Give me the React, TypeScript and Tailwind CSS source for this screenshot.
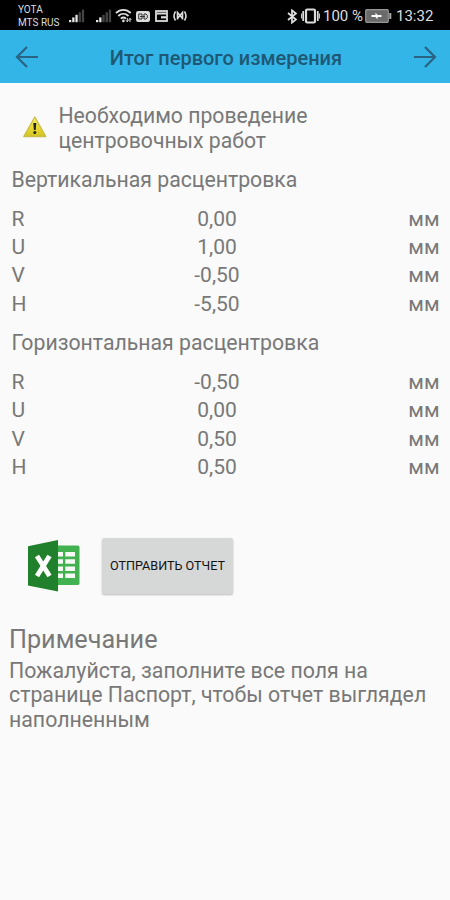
import type { ReactNode } from 'react';

type Row = { name: string; value: string };

const vertical: Row[] = [
  { name: 'R', value: '0,00' },
  { name: 'U', value: '1,00' },
  { name: 'V', value: '-0,50' },
  { name: 'H', value: '-5,50' },
];

const horizontal: Row[] = [
  { name: 'R', value: '-0,50' },
  { name: 'U', value: '0,00' },
  { name: 'V', value: '0,50' },
  { name: 'H', value: '0,50' },
];

function Signal({ level }: { level: number }) {
  return (
    <svg width="16" height="14" viewBox="0 0 16 14">
      {[0, 1, 2, 3, 4].map((i) => (
        <rect
          key={i}
          x={i * 3.2}
          y={11 - i * 2.6}
          width="2.3"
          height={2.2 + i * 2.6}
          fill={i < level ? '#e4e4e4' : '#444'}
        />
      ))}
    </svg>
  );
}

function StatusBar() {
  return (
    <div className="flex h-[30px] items-center bg-black pt-[2px] text-[#dedede]">
      <div className="ml-[18px] w-[51px] whitespace-nowrap text-[10px] leading-[13px]">
        <p>YOTA</p>
        <p>MTS RUS</p>
      </div>
      <Signal level={3} />
      <div className="ml-[11px]">
        <Signal level={2} />
      </div>
      {/* Wi-Fi */}
      <svg className="ml-[3px]" width="18" height="16" viewBox="0 0 18 16" fill="none" stroke="#e0e0e0" strokeWidth="1.8">
        <path d="M1 5C5.2 .7 11.5 .7 15.7 5M3.3 8C6.3 5.1 10.5 5.1 13.5 8M5.8 10.7C7.5 9.2 9.3 9.2 11 10.7" />
        <circle cx="8.4" cy="12.9" r="1.3" fill="#e0e0e0" stroke="none" />
        <path d="M12.3 10v3.5M11 12.3l1.3 1.5 1.3-1.5M15 14v-3.5M13.8 11.8l1.2-1.5 1.3 1.5" strokeWidth="1" />
      </svg>
      {/* HD */}
      <svg className="ml-[3px]" width="14" height="11" viewBox="0 0 14 11">
        <rect width="14" height="11" rx="2.2" fill="#dcdcdc" />
        <path d="M2.7 3H6v5H2.7zM8 3h2l1.3 1.3v2.4L10 8H8zM4 5.5h5" fill="none" stroke="#333" />
      </svg>
      <svg className="ml-[5px]" width="13" height="12" viewBox="0 0 13 12" fill="none" stroke="#dcdcdc">
        <rect x="1" y="1" width="11" height="10" strokeWidth="1.8" />
        <path d="M2 3.5h9" strokeWidth="2" />
        <path d="M6 7.3h5" strokeWidth="2.2" />
      </svg>
      <svg className="ml-[5px]" width="14" height="12" viewBox="0 0 14 12" fill="none" stroke="#dcdcdc" strokeWidth="1.6">
        <path d="M2.5 1.5Q-.5 6 2.5 10.5M11.5 1.5Q14.5 6 11.5 10.5M4.5 9.5v-7l2.5 3 2.5-3v7M4.5 8.5l2.5-3 2.5 3" />
      </svg>

      <svg className="ml-auto" width="10" height="15" viewBox="0 0 10 15" fill="none" stroke="#e0e0e0" strokeWidth="1.7">
        <path d="M1 4l8 6.5-4 3.2V1.3l4 3.2L1 11" />
      </svg>
      <svg className="ml-1" width="19" height="16" viewBox="0 0 19 16" fill="none" stroke="#dcdcdc">
        <rect x="5" y="1.5" width="9" height="13" rx="1.3" strokeWidth="2.2" />
        <path d="M2.2 3v10M16.8 3v10" strokeWidth="1.7" />
        <path d="M.6 5.5v5M18.4 5.5v5" />
      </svg>
      <span className="ml-[3px] w-[39px] whitespace-nowrap text-[15px] leading-none">100 %</span>
      <svg className="ml-[3px]" width="27" height="14" viewBox="0 0 27 14">
        <rect x=".7" y=".7" width="22.6" height="12.6" rx="1" fill="#6a6a6a" stroke="#969696" strokeWidth="1.2" />
        <path d="M24.3 4h2v6h-2z" fill="#aaa" />
        <path d="M6.5 6h4V3.5L12.500 6h4v2h-4v2.500L10.500 8h-4z" fill="#fff" />
      </svg>
      <span className="ml-1 mr-[17px] w-[37px] whitespace-nowrap text-[15px] leading-none">13:32</span>
    </div>
  );
}

function Arrow({ className }: { className?: string }) {
  return (
    <svg className={className} width="24" height="24" viewBox="0 0 24 24" fill="none" stroke="#2a6482" strokeWidth="2.2">
      <path d="M1 12h20.5M12 2l10 10-10 10" />
    </svg>
  );
}

function Table({ title, rows }: { title: ReactNode; rows: Row[] }) {
  return (
    <section className="pl-[11.5px] pr-[10.5px]">
      <h2 className="text-[21.25px] leading-[26px]">{title}</h2>
      <div className="mt-[11px]">
        {rows.map((row) => (
          <div key={row.name} className="grid h-[28.3px] grid-cols-3 items-center text-[21px]">
            <span>{row.name}</span>
            <span className="pr-[17px] text-center">{row.value}</span>
            <span className="text-right">мм</span>
          </div>
        ))}
      </div>
    </section>
  );
}

export default function App() {
  return (
    <div className="flex h-[900px] w-[450px] flex-col bg-[#fafafa] font-['Roboto',sans-serif] text-[#787878]">
      <StatusBar />
      <header className="flex h-[53px] items-center justify-between bg-[#33b5e8] pl-[15px] pr-[13px]">
        <Arrow className="rotate-180" />
        <h1 className="pt-[3px] text-[20px] font-medium text-[#205873]">Итог первого измерения</h1>
        <Arrow />
      </header>

      <div className="mt-[21px] flex items-center pl-[22px]">
        <svg className="mb-[3px]" width="26" height="24" viewBox="0 0 26 24">
          <defs>
            <linearGradient id="warn" x1="0" y1="0" x2="0" y2="1">
              <stop offset="0" stopColor="#f5ee78" />
              <stop offset=".6" stopColor="#e6d62e" />
              <stop offset="1" stopColor="#d4c422" />
            </linearGradient>
          </defs>
          <path d="M12.8 2l11 19.5h-22z" fill="url(#warn)" stroke="#cabd4a" strokeWidth="1.4" strokeLinejoin="round" />
          <path d="M11.3 8h3l-.6 7h-1.8z" fill="#222" />
          <circle cx="12.8" cy="17.5" r="1.5" fill="#222" />
        </svg>
        <p className="ml-[10.5px] text-[21.2px] leading-[24.6px]">
          Необходимо проведение
          <br />
          центровочных работ
        </p>
      </div>

      <div className="mt-[13.7px] flex flex-col gap-[13px]">
        <Table title="Вертикальная расцентровка" rows={vertical} />
        <Table title="Горизонтальная расцентровка" rows={horizontal} />
      </div>

      <div className="mt-[57.3px] flex h-[57px] items-center pl-7">
        <svg width="52" height="52" viewBox="0 0 52 52">
          <rect x="24" y="5.5" width="27.5" height="39.5" rx="1.8" fill="#42b150" />
          <path d="M29 12h6v4.5h-6zM37.3 12H47v4.5h-9.700zM29 19.200h6v4.500h-6zM37.300 19.200H47v4.500h-9.700zM29 26.400h6v4.500h-6zM37.300 26.400H47v4.500h-9.700zM29 33.600h6v4.500h-6zM37.300 33.600H47v4.500h-9.700z" fill="#f5faf5" />
          <path d="M0 6.200L30 0v51.500L0 45.500z" fill="#21802b" />
          <path d="M9 16l12.500 20M21.500 16L9 36" stroke="#fff" strokeWidth="4.800" />
        </svg>
        <button className="ml-[22px] h-[56px] w-[131px] whitespace-nowrap rounded-xs bg-[#d6d7d7] text-[12.6px] text-[#111] shadow-[0_1px_2px_rgba(0,0,0,0.25)]">
          ОТПРАВИТЬ ОТЧЕТ
        </button>
      </div>

      <section className="mt-[30px] px-[9px]">
        <h2 className="text-[25.2px] leading-[30px]">Примечание</h2>
        <p className="mt-1 text-[21.3px] leading-[24.6px]">
          Пожалуйста, заполните все поля на странице Паспорт, чтобы отчет выглядел наполненным
        </p>
      </section>
    </div>
  );
}
